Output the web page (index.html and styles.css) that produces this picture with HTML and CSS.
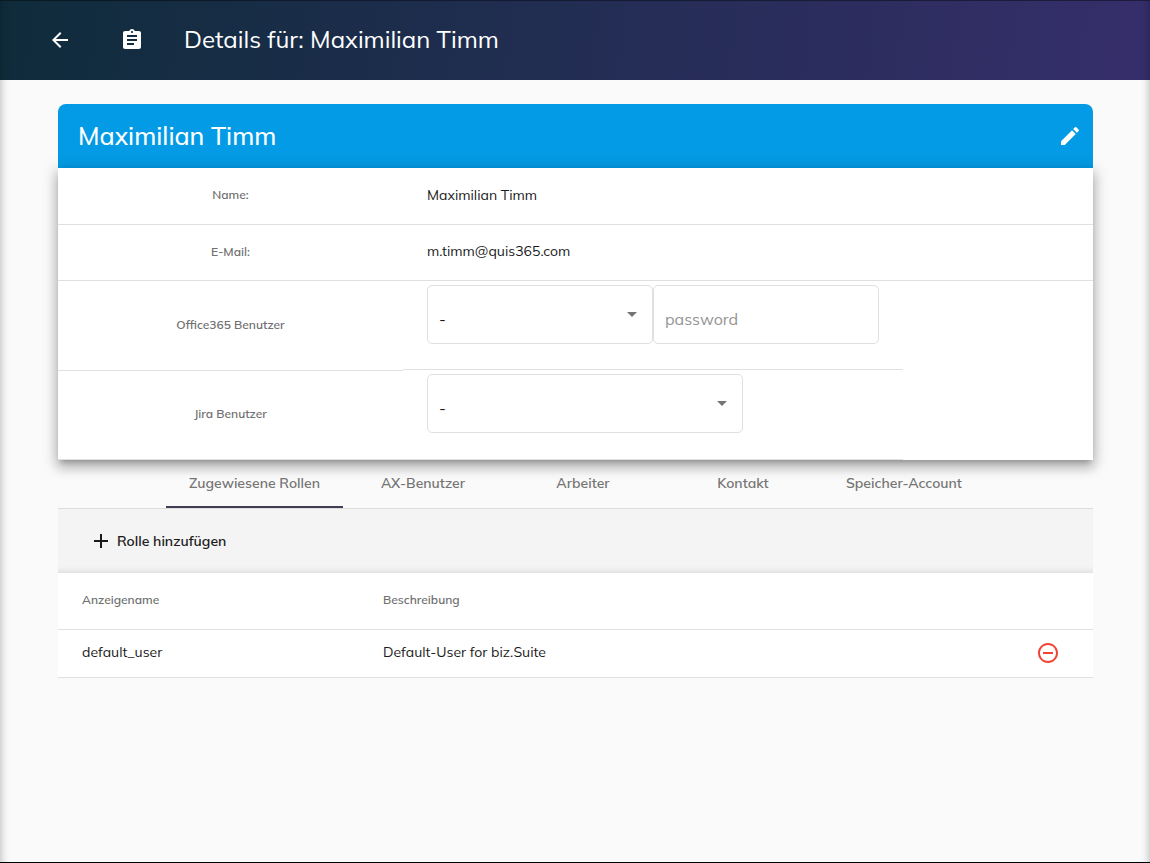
FILE: index.html
```
<!DOCTYPE html>
<html lang="de">
<head>
    <meta charset="UTF-8">
    <meta name="viewport" content="width=device-width, initial-scale=1.0">
    <title>Details für: Maximilian Timm</title>
    <link rel="stylesheet" href="styles.css">
</head>
<body>
    <header class="topbar">
        <button type="button" class="icon-btn back" aria-label="Zurück">
            <svg width="24" height="24" viewBox="0 0 24 24"><path d="M20 11H7.83l5.59-5.59L12 4l-8 8 8 8 1.41-1.41L7.83 13H20v-2z"/></svg>
        </button>
        <svg class="clipboard" width="24" height="24" viewBox="0 0 24 24"><path d="M19 3h-4.18C14.4 1.84 13.3 1 12 1s-2.400.84-2.820 2H5c-1.100 0-2 .9-2 2v14c0 1.100.9 2 2 2h14c1.100 0 2-.9 2-2V5c0-1.100-.9-2-2-2zm-7 0c.55 0 1 .45 1 1s-.45 1-1 1-1-.45-1-1 .45-1 1-1zm2 14H7v-2h7v2zm3-4H7v-2h10v2zm0-4H7V7h10v2z"/></svg>
        <h1>Details für: Maximilian Timm</h1>
    </header>
    <main class="content">
        <section class="card">
            <div class="card-header">
                <h2>Maximilian Timm</h2>
                <button type="button" class="icon-btn" aria-label="Bearbeiten">
                    <svg width="24" height="24" viewBox="0 0 24 24"><path d="M3 17.250V21h3.750L17.810 9.940l-3.750-3.750L3 17.250zM20.710 7.040c.39-.39.39-1.020 0-1.410l-2.340-2.340c-.39-.39-1.020-.39-1.410 0l-1.830 1.830 3.750 3.750 1.830-1.830z"/></svg>
                </button>
            </div>
            <form class="card-body">
                <div class="row">
                    <span class="label">Name:</span>
                    <span class="value">Maximilian Timm</span>
                </div>
                <div class="row">
                    <span class="label">E-Mail:</span>
                    <span class="value">m.timm@quis365.com</span>
                </div>
                <div class="accounts">
                    <div class="account-labels">
                        <label class="label" for="office">Office365 Benutzer</label>
                        <label class="label" for="jira">Jira Benutzer</label>
                    </div>
                    <div class="account-fields">
                        <div class="fields">
                            <div class="select-box">
                                <select id="office"><option>-</option></select>
                            </div>
                            <input type="password" id="password" placeholder="password" aria-label="password">
                        </div>
                        <div class="fields">
                            <div class="select-box wide">
                                <select id="jira"><option>-</option></select>
                            </div>
                        </div>
                    </div>
                </div>
            </form>
        </section>
        <nav class="tabs">
            <a href="#rollen" class="tab active">Zugewiesene Rollen</a>
            <a href="#ax" class="tab">AX-Benutzer</a>
            <a href="#arbeiter" class="tab">Arbeiter</a>
            <a href="#kontakt" class="tab">Kontakt</a>
            <a href="#speicher" class="tab">Speicher-Account</a>
        </nav>
        <section id="rollen">
            <div class="toolbar">
                <button type="button" class="add-btn">
                    <svg width="24" height="24" viewBox="0 0 24 24"><path d="M19 13h-6v6h-2v-6H5v-2h6V5h2v6h6v2z"/></svg>
                    Rolle hinzufügen
                </button>
            </div>
            <table class="roles">
                <thead>
                    <tr>
                        <th class="col-name">Anzeigename</th>
                        <th>Beschreibung</th>
                        <th class="col-action"></th>
                    </tr>
                </thead>
                <tbody>
                    <tr>
                        <td>default_user</td>
                        <td>Default-User for biz.Suite</td>
                        <td class="col-action">
                            <button type="button" class="icon-btn remove" aria-label="Rolle entfernen">
                                <svg width="24" height="24" viewBox="0 0 24 24"><path d="M7 11v2h10v-2H7zm5-9C6.480 2 2 6.480 2 12s4.480 10 10 10 10-4.480 10-10S17.520 2 12 2zm0 18c-4.410 0-8-3.590-8-8s3.590-8 8-8 8 3.590 8 8-3.590 8-8 8z"/></svg>
                            </button>
                        </td>
                    </tr>
                </tbody>
            </table>
        </section>
    </main>
</body>
</html>
```

FILE: styles.css
```
* {
    box-sizing: border-box;
}
body {
    margin: 0;
    min-height: 100vh;
    background-color: #fafafa;
    border-bottom: 1px solid #000;
    color: #1a1a1a;
    font-family: Muli, Mulish, Lato, sans-serif;
    font-size: 14px;
}
/* shaded window edges */
body::after {
    content: "";
    position: fixed;
    inset: 0 0 1px;
    border-top: 1px solid rgba(0, 0, 0, 0.4);
    box-shadow: inset 9px 0 8px -8px rgba(0, 0, 0, 0.25), inset -9px 0 8px -8px rgba(0, 0, 0, 0.25);
    pointer-events: none;
}
h1,
h2 {
    margin: 0;
    padding-bottom: 2px;
    font-size: 24px;
    font-weight: 400;
}
svg {
    display: block;
    fill: currentColor;
}
.icon-btn {
    padding: 0;
    border: none;
    background: none;
    color: inherit;
    cursor: pointer;
}

.topbar {
    display: flex;
    align-items: center;
    height: 80px;
    padding: 0 48px;
    background: linear-gradient(97deg, #0f2c3b, #362e6b);
    color: #fff;
}
.back {
    margin-right: 48px;
}
.clipboard {
    margin-right: 40px;
}

.content {
    padding: 24px 57px 0 58px;
}
.card-header {
    display: flex;
    align-items: center;
    justify-content: space-between;
    height: 64px;
    padding: 0 11px 0 20px;
    border-radius: 8px 8px 0 0;
    background-color: #039be5;
    color: #fff;
}
.card-header h2 {
    font-size: 25px;
    font-weight: 500;
}
.card-body {
    background-color: #fff;
    box-shadow: 0 5px 5px -3px rgba(0, 0, 0, 0.2), 0 8px 10px 1px rgba(0, 0, 0, 0.14), 0 3px 14px 2px rgba(0, 0, 0, 0.2);
}
.row {
    display: flex;
    align-items: center;
    height: 56px;
    padding-bottom: 3px;
    border-bottom: 1px solid #e0e0e0;
}
.row:first-child {
    height: 57px;
}
.label {
    display: flex;
    flex: 0 0 33.333%;
    align-items: center;
    justify-content: center;
    color: #707070;
    font-size: 12px;
    font-weight: 600;
}
.value {
    padding-left: 24px;
}
.accounts {
    display: flex;
}
.account-labels {
    flex: 0 0 33.333%;
}
.account-labels .label {
    height: 90px;
    padding-bottom: 3px;
    border-bottom: 1px solid #e0e0e0;
}
.account-labels .label:last-child {
    height: 89px;
}
.account-fields {
    flex: 0 1 500px;
}
.fields {
    display: flex;
    align-items: flex-start;
    height: 89px;
    padding: 4px 24px;
    border-bottom: 1px solid #e0e0e0;
}
.fields:last-child {
    height: 90px;
}
.select-box {
    position: relative;
    width: 50%;
}
.select-box.wide {
    width: 70%;
}
.select-box::after {
    content: "";
    position: absolute;
    top: 27px;
    right: 16px;
    border: 5px solid transparent;
    border-top-color: #757575;
    border-bottom: none;
    pointer-events: none;
}
.fields select,
.fields input {
    height: 59px;
    padding: 8px 11px 0;
    border: 1px solid #e0e0e0;
    border-radius: 5px;
    background-color: #fff;
    color: inherit;
    font-family: inherit;
    font-size: 16px;
}
.fields select {
    width: 100%;
    appearance: none;
}
.fields input {
    width: 50%;
}
.fields input::placeholder {
    color: #949494;
}

.tabs {
    display: flex;
    justify-content: center;
    border-bottom: 1px solid #dcdcdc;
}
.tab {
    min-width: 160px;
    height: 48px;
    padding: 0 23px;
    border-bottom: 2px solid transparent;
    color: #757575;
    font-weight: 600;
    line-height: 46px;
    text-align: center;
    text-decoration: none;
}
.tab.active {
    border-bottom-color: #403d54;
}

.toolbar {
    display: flex;
    align-items: center;
    height: 64px;
    padding: 0 31px;
    background-color: #f4f4f4;
    box-shadow: inset 0 -7px 6px -6px rgba(0, 0, 0, 0.12);
}
.add-btn {
    display: flex;
    align-items: center;
    gap: 4px;
    padding: 0;
    border: none;
    background: none;
    color: inherit;
    font-family: inherit;
    font-size: 14px;
    font-weight: 600;
    cursor: pointer;
}
.roles {
    width: 100%;
    border-collapse: collapse;
    background-color: #fff;
    text-align: left;
}
.roles th,
.roles td {
    padding: 0 0 3px;
    border-bottom: 1px solid #e0e0e0;
}
.roles th {
    height: 56px;
    color: #707070;
    font-size: 12px;
    font-weight: 600;
}
.roles td {
    height: 48px;
}
.roles th:first-child,
.roles td:first-child {
    padding-left: 24px;
}
.col-name {
    width: 325px;
}
.roles .col-action {
    width: 90px;
    padding: 0 33px 0 0;
}
.remove {
    display: block;
    margin-left: auto;
    color: #f44336;
}
```
